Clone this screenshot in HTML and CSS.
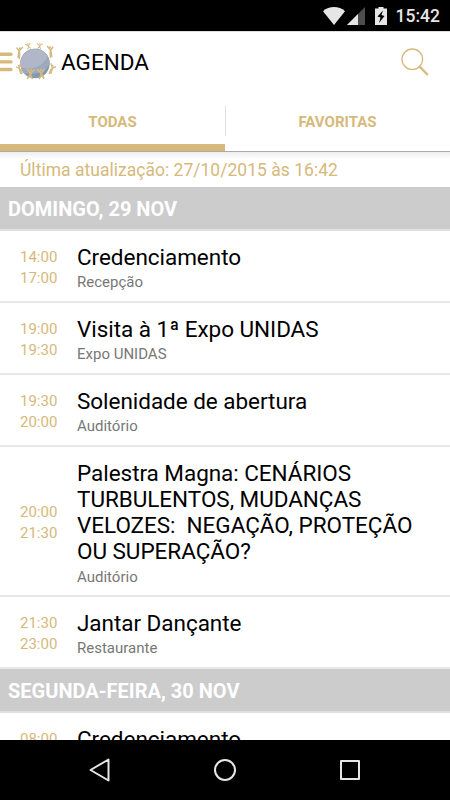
FILE: index.html
```html
<!DOCTYPE html>
<html lang="pt-BR">
<head>
  <meta charset="UTF-8" />
  <meta name="viewport" content="width=device-width, initial-scale=1.0">
  <title>Agenda</title>
  <link rel="stylesheet" href="styles.css">
</head>
<body>
  <div class="status-bar">
    <svg class="wifi" viewBox="0 0 22 18" width="22" height="18">
      <path d="M0 4.2C6-1.3 16-1.3 22 4.2L11 18z"/>
    </svg>
    <svg class="signal" viewBox="0 0 18 18" width="18" height="18">
      <path class="dim" d="M18 0v18H0z"/>
      <path d="M11 7v11H0z"/>
    </svg>
    <svg class="battery" viewBox="0 0 12 18" width="12" height="18">
      <path d="M0 1.500h3.500V0h5v1.500H12V18H0z"/>
      <path class="bolt" d="M8 3.500L2.500 9.500l3 1L4 16l5.500-7-3-1z"/>
    </svg>
    <span class="clock">15:42</span>
  </div>

  <header class="app-bar">
    <svg class="menu" viewBox="0 0 13 20" width="13" height="20">
      <path d="M0 2.200h11M0 9.900h11M0 17.500h11"/>
    </svg>
    <svg class="logo" viewBox="0 0 40 40" width="40" height="40">
      <defs>
        <g id="person">
          <circle cx="0" cy="-3.800" r="1.200"/>
          <path d="M-4-4.500L-1-1.300H1L4-4.500M-.3-1.300L-.5 1.800L-2.800 5.500M.3-1.300L.5 1.800L2.500 5.500"/>
        </g>
        <!-- side figure, arms up and body curved along the globe -->
        <g id="side">
          <circle cx=".5" cy="-4" r="1.200"/>
          <path d="M-3.500-5L-.5-1.500L4-5.500M-.5-1.500Q1 1-.3 6.500M-.8-1Q-1 2-2 5.500"/>
        </g>
      </defs>
      <circle class="globe-dark" cx="19" cy="21.500" r="14.700"/>
      <path class="globe-shade" d="M4.300 21.500A14.700 14.700 0 0 1 33.700 21.500C31 29 20 34 7.800 31Q4.600 27 4.300 21.500z"/>
      <path class="globe" d="M5 25.500A14.700 14.700 0 0 1 31.500 13.800C29 23 17 29 5 25.500z"/>
      <g class="people">
        <use href="#person" transform="translate(14.500 31.500) rotate(5)"/>
        <use href="#person" transform="translate(25.300 31.500) rotate(-5)"/>
        <use href="#side" transform="translate(4 27) rotate(-28) scale(.85)"/>
        <use href="#side" transform="translate(35.500 27) rotate(28) scale(-.85 .85)"/>
        <use href="#side" transform="translate(3.500 10.500) scale(.85 1)"/>
        <use href="#side" transform="translate(34.300 9.500) scale(-.85 1)"/>
        <use href="#person" transform="translate(12.500 4) rotate(-15) scale(.62 .55)"/>
        <use href="#person" transform="translate(23.500 4) rotate(8) scale(.7 .55)"/>
      </g>
    </svg>
    <h1>AGENDA</h1>
    <svg class="search" viewBox="0 0 28 28" width="28" height="28">
      <circle cx="11.300" cy="11.300" r="10.300"/>
      <path d="M18.500 18.500L26.800 27"/>
    </svg>
  </header>

  <nav class="tabs">
    <a class="tab active">TODAS</a>
    <a class="tab">FAVORITAS</a>
  </nav>

  <main class="agenda">
    <p class="updated">Última atualização: 27/10/2015 às 16:42</p>

    <h2 class="day">DOMINGO, 29 NOV</h2>
    <ul class="events">
      <li class="event">
        <div class="time"><span>14:00</span><span>17:00</span></div>
        <div class="info"><h3>Credenciamento</h3><p>Recepção</p></div>
      </li>
      <li class="event">
        <div class="time"><span>19:00</span><span>19:30</span></div>
        <div class="info"><h3>Visita à 1ª Expo UNIDAS</h3><p>Expo UNIDAS</p></div>
      </li>
      <li class="event">
        <div class="time"><span>19:30</span><span>20:00</span></div>
        <div class="info"><h3>Solenidade de abertura</h3><p>Auditório</p></div>
      </li>
      <li class="event">
        <div class="time"><span>20:00</span><span>21:30</span></div>
        <div class="info"><h3>Palestra Magna: CENÁRIOS TURBULENTOS, MUDANÇAS VELOZES: &nbsp;NEGAÇÃO, PROTEÇÃO OU SUPERAÇÃO?</h3><p>Auditório</p></div>
      </li>
      <li class="event">
        <div class="time"><span>21:30</span><span>23:00</span></div>
        <div class="info"><h3>Jantar Dançante</h3><p>Restaurante</p></div>
      </li>
    </ul>

    <h2 class="day">SEGUNDA-FEIRA, 30 NOV</h2>
    <ul class="events">
      <li class="event open">
        <div class="time"><span>08:00</span></div>
        <div class="info"><h3>Credenciamento</h3></div>
      </li>
    </ul>
  </main>

  <footer class="nav-bar">
    <svg viewBox="0 0 24 24" width="24" height="24"><path d="M20.500 1.500v21L2.500 12z"/></svg>
    <svg viewBox="0 0 24 24" width="24" height="24"><circle cx="12" cy="12" r="10"/></svg>
    <svg viewBox="0 0 24 24" width="24" height="24"><path d="M3 3h18v18H3z"/></svg>
  </footer>
</body>
</html>
```

FILE: styles.css
```css
:root {
  --gold: #d6b97b;
  --grey: #cccccc;
  --line: #e8e8e8;
}

* {
  box-sizing: border-box;
  margin: 0;
  padding: 0;
}

body {
  font-family: Roboto, sans-serif;
  background: #fff;
  color: #000;
  height: 800px;
  display: flex;
  flex-direction: column;
  overflow: hidden;
}

svg {
  display: block;
  flex: none;
}

.status-bar {
  height: 31px;
  flex: none;
  background: #000;
  display: flex;
  align-items: center;
  justify-content: flex-end;
  padding-right: 10px;
  color: #e6e6e6;
  fill: #e6e6e6;
}

.signal {
  margin-left: 2px;
}

.signal .dim {
  fill: #4d4d4d;
}

.battery {
  margin-left: 10px;
}

.bolt {
  fill: #000;
}

.clock {
  margin-left: 9px;
  font-size: 17.5px;
  font-weight: 500;
  line-height: 31px;
  padding-top: 1px;
}

.app-bar {
  height: 62px;
  flex: none;
  border-top: 1px solid #ddd;
  display: flex;
  align-items: center;
  padding-right: 21px;
  padding-bottom: 2px;
}

.menu {
  stroke: var(--gold);
  stroke-width: 3.4;
  stroke-linecap: round;
}

.logo {
  margin-left: 3px;
}

.globe {
  fill: #b1b7c8;
}

.globe-shade {
  fill: #9caabd;
}

.globe-dark {
  fill: #8199b2;
}

.people {
  fill: var(--gold);
  stroke: var(--gold);
  stroke-width: 1.6;
}

.people circle, #person circle, #side circle {
  stroke: none;
}

#person path, #side path {
  fill: none;
}

.app-bar h1 {
  flex: 1;
  margin-left: 5px;
  font-size: 22.5px;
  font-weight: 400;
}

.search {
  fill: none;
  stroke: var(--gold);
  stroke-width: 1.3;
}

.search path {
  stroke-width: 2.4;
}

.tabs {
  height: 59px;
  flex: none;
  display: flex;
  border-bottom: 1px solid #aaa;
}

.tab {
  flex: 1;
  display: flex;
  align-items: center;
  justify-content: center;
  font-size: 15px;
  font-weight: 700;
  color: var(--gold);
  border-bottom: 7px solid transparent;
  padding-top: 7px;
}

.tab.active {
  border-bottom-color: var(--gold);
}

.tab + .tab {
  background: linear-gradient(#e2e2e2, #e2e2e2) left 13px / 1px 30px no-repeat;
}

.agenda {
  flex: 1;
  min-height: 0;
  overflow: hidden;
}

.updated {
  height: 35px;
  padding-left: 20px;
  background: linear-gradient(#eeeeee, #ffffff 7px);
  font-size: 17.5px;
  line-height: 36px;
  letter-spacing: 0.02px;
  color: var(--gold);
}

.day {
  height: 44px;
  padding-left: 8px;
  background: var(--grey);
  border-bottom: 2px solid #e0e0e0;
  color: #fff;
  font-size: 20px;
  font-weight: 700;
  line-height: 44px;
}

.events {
  list-style: none;
}

.event {
  display: flex;
  align-items: center;
  min-height: 72px;
  padding: 12.5px 20px 9.5px;
  border-bottom: 2px solid var(--line);
}

.event.open {
  align-items: flex-start;
}

.event.open .time {
  padding-top: 3px;
}

.time {
  width: 57px;
  flex: none;
  font-size: 15px;
  line-height: 20.5px;
  color: var(--gold);
}

.time span {
  display: block;
}

.info h3 {
  font-size: 22.5px;
  font-weight: 400;
  line-height: 26.3px;
  letter-spacing: -0.04px;
}

.info p {
  font-size: 15px;
  line-height: 18px;
  margin-top: 3px;
  color: #777;
}

.nav-bar {
  height: 60px;
  flex: none;
  background: #000;
  display: flex;
  align-items: center;
  justify-content: center;
  gap: 101px;
  fill: none;
  stroke: #e6e6e6;
  stroke-width: 2;
  stroke-linejoin: round;
}
```
